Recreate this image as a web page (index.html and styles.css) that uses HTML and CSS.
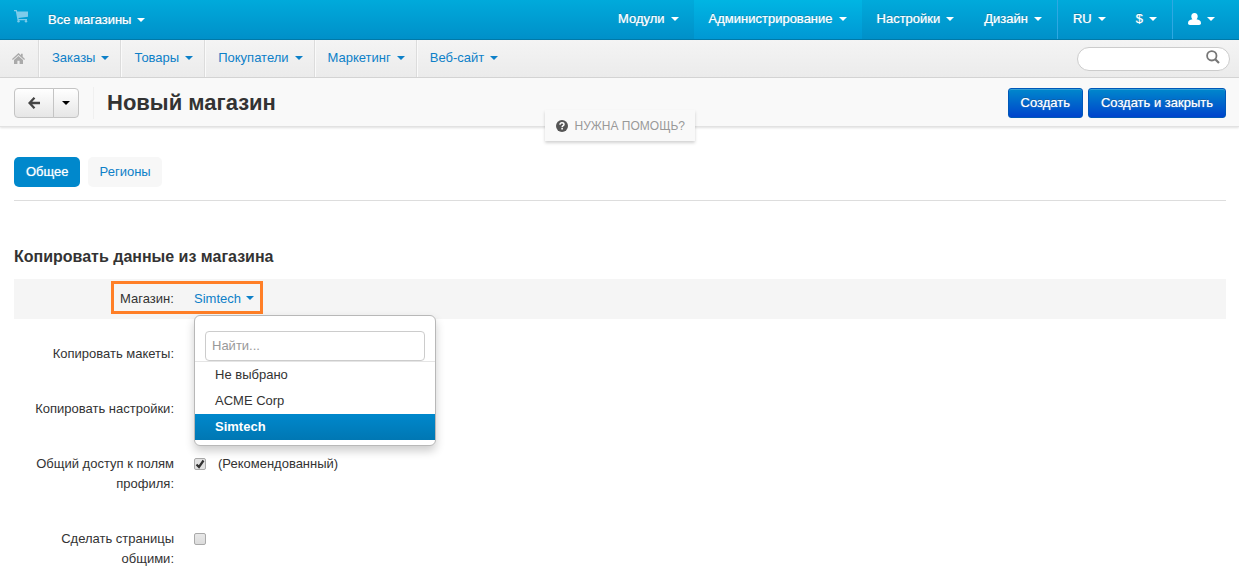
FILE: index.html
```
<!DOCTYPE html>
<html lang="ru">
<head>
<meta charset="utf-8">
<title>Новый магазин</title>
<link rel="stylesheet" href="styles.css">
</head>
<body>
<header>
  <nav class="topbar">
    <a class="cart" href="#" aria-label="Корзина"><svg width="15" height="13" viewBox="0 0 15 13"><path fill="#7dcbea" d="M0 0h2.800l.4 1.500H14v5.200L4.500 8l.2 1H13v1.300H3.500L1.800 1.300H0z"/><circle fill="#7dcbea" cx="4.500" cy="11.300" r="1.200"/><circle fill="#7dcbea" cx="12" cy="11.300" r="1.200"/></svg></a>
    <a class="stores" href="#">Все магазины<span class="caret"></span></a>
    <ul class="menu">
      <li><a href="#">Модули<span class="caret"></span></a></li>
      <li class="active"><a href="#">Администрирование<span class="caret"></span></a></li>
      <li><a href="#">Настройки<span class="caret"></span></a></li>
      <li><a href="#">Дизайн<span class="caret"></span></a></li>
      <li class="divided"><a href="#">RU<span class="caret"></span></a></li>
      <li><a href="#">$<span class="caret"></span></a></li>
      <li class="divided"><a href="#" aria-label="Профиль"><svg width="13" height="12" viewBox="0 0 13 12"><path fill="#fff" d="M6.500 0c2.200 0 3.200 1.300 3.200 3.200 0 1.300-.5 2.400-1.200 3.100C11.300 6.700 13 7.700 13 10.300c0 1.100-.8 1.700-1.900 1.700H1.900C.8 12 0 11.400 0 10.300c0-2.600 1.700-3.600 4.500-4C3.800 5.600 3.300 4.500 3.300 3.200 3.300 1.300 4.300 0 6.500 0z"/></svg><span class="caret"></span></a></li>
    </ul>
  </nav>
  <nav class="subbar">
    <ul class="sections">
      <li class="home"><a href="#" aria-label="Главная"><svg width="13" height="11" viewBox="0 0 13 11"><path fill="#aaa" d="M6.500 0 9 2.200V.7h1.700v3.100L13 6l-.8.9L6.500 1.900.8 6.900 0 6zM6.500 2.900 11 6.900V11H7.600V7.800H5.400V11H2V6.900z"/></svg></a></li>
      <li><a href="#">Заказы<span class="caret"></span></a></li>
      <li><a href="#">Товары<span class="caret"></span></a></li>
      <li><a href="#">Покупатели<span class="caret"></span></a></li>
      <li><a href="#">Маркетинг<span class="caret"></span></a></li>
      <li><a href="#">Веб-сайт<span class="caret"></span></a></li>
    </ul>
    <form class="search">
      <input type="text" aria-label="Поиск">
      <button type="button" aria-label="Искать"><svg width="14" height="14" viewBox="0 0 14 14"><circle cx="5.800" cy="5.800" r="4.700" fill="none" stroke="#777" stroke-width="1.800"/><path d="M9.200 9.200 13 13" stroke="#777" stroke-width="2.200"/></svg></button>
    </form>
  </nav>
  <div class="titlebar">
    <div class="back">
      <button type="button" aria-label="Назад"><svg width="12" height="12" viewBox="0 0 12 12"><path d="M6.500.8 1.500 6l5 5.200M2 6h10" fill="none" stroke="#444" stroke-width="2.300"/></svg></button>
      <button type="button" aria-label="Последние страницы"><span class="caret"></span></button>
    </div>
    <h1>Новый магазин</h1>
    <div class="actions">
      <button type="button">Создать</button>
      <button type="button">Создать и закрыть</button>
    </div>
    <a class="help" href="#"><svg width="12" height="12" viewBox="0 0 12 12"><circle cx="6" cy="6" r="6" fill="#555"/><path d="M4 4.700C4 3.300 4.800 2.800 6 2.800s2 .7 2 1.700C8 5.800 6.100 5.700 6.100 7.300" fill="none" stroke="#fff" stroke-width="1.500"/><path fill="#fff" d="M5.300 8.100h1.600v1.500H5.300z"/></svg>НУЖНА ПОМОЩЬ?</a>
  </div>
</header>
<main>
  <nav class="tabs">
    <a class="current" href="#">Общее</a>
    <a href="#">Регионы</a>
  </nav>
  <h2>Копировать данные из магазина</h2>
  <form>
    <div class="row shaded">
      <div class="marked">
        <span>Магазин:</span>
        <div class="picker">
          <button class="toggle" type="button">Simtech<span class="caret"></span></button>
          <div class="dropdown">
            <div class="find"><input type="text" placeholder="Найти..." aria-label="Найти"></div>
            <ul>
              <li><a href="#">Не выбрано</a></li>
              <li><a href="#">ACME Corp</a></li>
              <li><a class="chosen" href="#">Simtech</a></li>
            </ul>
          </div>
        </div>
      </div>
    </div>
    <div class="row"><label for="layouts">Копировать макеты:</label><input type="checkbox" id="layouts"></div>
    <div class="row"><label for="settings">Копировать настройки:</label><input type="checkbox" id="settings"></div>
    <div class="row"><label for="profile">Общий доступ к полям профиля:</label><input type="checkbox" id="profile" checked><span class="note">(Рекомендованный)</span></div>
    <div class="row"><label for="pages">Сделать страницы общими:</label><input type="checkbox" id="pages"></div>
  </form>
</main>
</body>
</html>
```
FILE: styles.css
```
* { box-sizing: border-box; }
body {
  margin: 0;
  background: #fff;
  color: #333;
  font: 13px/20px "Liberation Sans", Arial, sans-serif;
}
ul { list-style: none; margin: 0; padding: 0; }
a { color: #0d80c8; text-decoration: none; }
button, input { font: inherit; }
svg { display: block; }
.caret {
  display: inline-block;
  border: 4px solid transparent;
  border-top-color: currentColor;
  border-bottom: 0;
  margin-left: 6px;
}

.topbar {
  display: flex;
  height: 40px;
  padding: 0 9px 0 14px;
  background: linear-gradient(#00aadb, #0090c9);
  border-bottom: 1px solid #0079a8;
}
.topbar a {
  display: flex;
  align-items: center;
  color: #fff;
  text-shadow: 0 0 1px rgba(255, 255, 255, .7), 0 -1px 0 rgba(0, 0, 0, .25);
}
.topbar .cart { align-items: flex-start; padding-top: 10px; width: 34px; }
.menu { display: flex; margin-left: auto; }
.menu li { display: flex; }
.menu a { padding: 0 15px 2px; }
.menu .active { background: linear-gradient(#00b5e3, #0098d4); }
.menu .divided { border-left: 1px solid #2fa8e2; }

.subbar {
  display: flex;
  height: 38px;
  padding: 0 9px 0 0;
  background: linear-gradient(#f4f4f4, #ebebeb);
  border-bottom: 1px solid #d5d5d5;
}
.sections { display: flex; flex: 1; }
.sections li { display: flex; border-left: 1px solid #dcdcdc; box-shadow: inset 1px 0 #fafafa; }
.sections .home { border: 0; box-shadow: none; }
.sections a { display: flex; align-items: center; padding: 0 11px 2px 13px; }
.sections .home a { padding: 0 13px 0 12px; }
.search { position: relative; align-self: center; }
.search input {
  display: block;
  width: 153px;
  height: 24px;
  padding: 0 30px 0 12px;
  border: 1px solid #ccc;
  border-radius: 12px;
  background: #fff;
}
.search button {
  position: absolute;
  top: 3px;
  right: 10px;
  padding: 0;
  border: 0;
  background: none;
}

.titlebar {
  position: relative;
  display: flex;
  align-items: center;
  height: 49px;
  padding: 2px 13px 0 14px;
  background: #f9f9f9;
  border-bottom: 1px solid #e2e2e2;
  box-shadow: 0 1px 2px rgba(0, 0, 0, .12);
}
.back { display: flex; }
.back button {
  display: flex;
  align-items: center;
  justify-content: center;
  width: 40px;
  height: 30px;
  padding: 0;
  border: 1px solid #c4c4c4;
  border-radius: 4px 0 0 4px;
  background: linear-gradient(#fff, #e6e6e6);
  color: #000;
}
.back button + button { width: 26px; margin-left: -1px; border-radius: 0 4px 4px 0; }
.back .caret { margin: 0; }
h1 {
  margin: 0 0 0 14px;
  padding-left: 13px;
  border-left: 1px solid #f0f0f0;
  font-size: 22px;
  line-height: 32px;
  font-weight: 700;
}
.actions { display: flex; gap: 5px; margin-left: auto; }
.actions button {
  height: 30px;
  padding: 0 12px;
  border: 1px solid #0058b8;
  border-radius: 3px;
  background: linear-gradient(#0088cc, #0044cc);
  box-shadow: inset 0 1px 0 rgba(255, 255, 255, .2);
  color: #fff;
  text-shadow: 0 0 1px rgba(255, 255, 255, .7), 0 -1px 0 rgba(0, 0, 0, .25);
}
.help {
  position: absolute;
  top: 32px;
  left: 50%;
  display: flex;
  align-items: center;
  gap: 7px;
  width: 150px;
  height: 31px;
  margin-left: -75px;
  padding-left: 11px;
  background: #f9f9f9;
  box-shadow: 0 2px 3px rgba(0, 0, 0, .18);
  color: #999;
  font-size: 12px;
  white-space: nowrap;
}

main { padding: 30px 13px 0 14px; }
.tabs { display: flex; gap: 8px; padding-bottom: 13px; border-bottom: 1px solid #ddd; }
.tabs a { padding: 5px 11px 5px 12px; border-radius: 5px; background: #f7f7f7; }
.tabs .current { background: #08c; color: #fff; text-shadow: 0 0 1px rgba(255, 255, 255, .7); }
h2 { margin: 45px 0 12px; font-size: 16px; line-height: 21px; font-weight: 700; }
.row { display: flex; align-items: flex-start; margin-bottom: 35px; }
.row label { width: 160px; text-align: right; }
.row > input { flex: none; margin: 4px 0 0 20px; }
.note { margin-left: 12px; }
.shaded { height: 40px; margin-bottom: 25px; padding-left: 97px; background: #f5f5f5; }
.marked {
  display: flex;
  justify-content: space-between;
  width: 152px;
  height: 33px;
  margin-top: 2px;
  padding: 5px 6px;
  border: 3px solid #ff7f27;
}
.picker { position: relative; width: 60px; }
.toggle { padding: 0; border: 0; background: none; color: #0d80c8; white-space: nowrap; }
.toggle .caret { margin: 0 0 3px 5px; }
input[type="checkbox"] {
  appearance: none;
  width: 12px;
  height: 12px;
  border: 1px solid #aaa;
  border-radius: 2px;
  background: linear-gradient(#e8e8e8, #dcdcdc);
}
input[type="checkbox"]:checked {
  background: url("data:image/svg+xml,%3Csvg xmlns='http://www.w3.org/2000/svg' viewBox='0 0 10 10'%3E%3Cpath d='M1.500 5.500 4 8 8.500 1.500' fill='none' stroke='%23333' stroke-width='2.200'/%3E%3C/svg%3E") #e2e2e2;
}
.dropdown {
  position: absolute;
  top: 26px;
  left: 0;
  width: 242px;
  padding: 15px 0 5px;
  border: 1px solid #b8b8b8;
  border-radius: 6px;
  background: #fff;
  box-shadow: 0 5px 10px rgba(0, 0, 0, .2);
}
.find { padding: 0 10px; border-bottom: 1px solid #e5e5e5; }
.find input {
  display: block;
  width: 100%;
  height: 30px;
  padding: 0 6px 2px;
  border: 1px solid #ccc;
  border-radius: 4px;
}
.find input::placeholder { color: #999; }
.dropdown li a { display: block; padding: 3px 20px; color: #333; }
.dropdown li .chosen { background: linear-gradient(#0088cc, #0077b3); color: #fff; font-weight: 700; }
```
